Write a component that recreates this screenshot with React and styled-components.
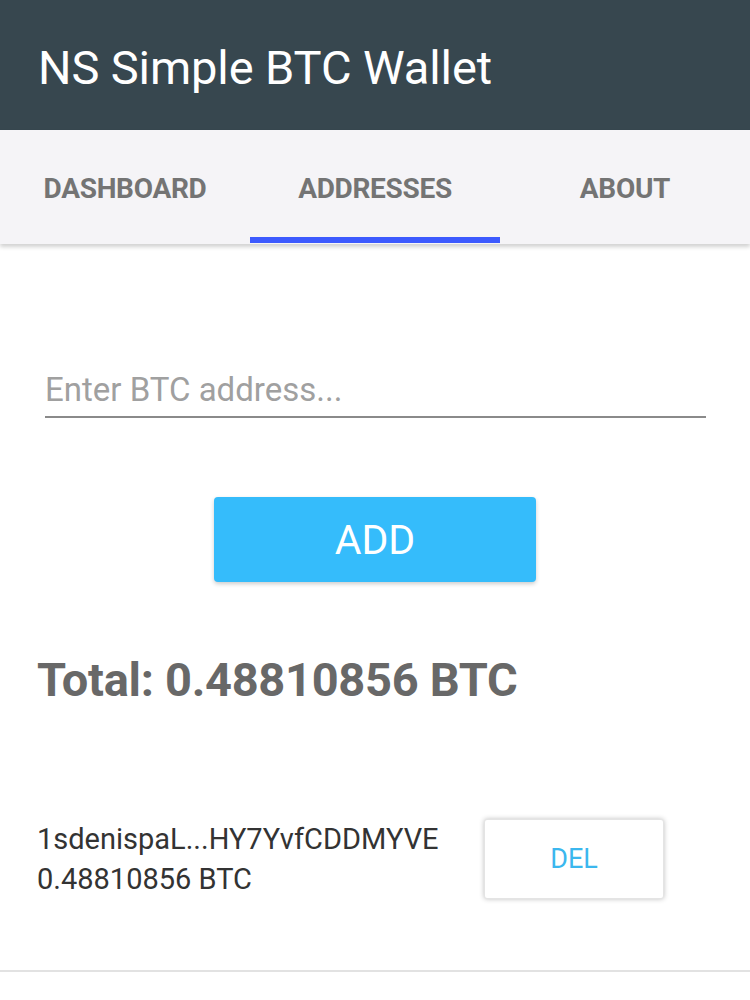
import styled, { createGlobalStyle } from "styled-components";

const GlobalStyle = createGlobalStyle`
  html, body {
    margin: 0;
    padding: 0;
    background: #fff;
    font-family: Roboto, "Liberation Sans", sans-serif;
  }
`;

const tabs = ["DASHBOARD", "ADDRESSES", "ABOUT"];

const addresses = [
  { id: 1, label: "1sdenispaL...HY7YvfCDDMYVE", balance: "0.48810856 BTC" },
];

const App = () => {
  return (
    <Page>
      <GlobalStyle />
      <ActionBar>
        <Title>NS Simple BTC Wallet</Title>
      </ActionBar>
      <TabBar>
        {tabs.map((tab) => (
          <Tab key={tab} active={tab === "ADDRESSES"}>
            {tab}
          </Tab>
        ))}
      </TabBar>
      <Content>
        <AddressInput placeholder="Enter BTC address..." />
        <AddButton type="button">ADD</AddButton>
        <Total>Total: 0.48810856 BTC</Total>
        <List>
          {addresses.map((item) => (
            <Row key={item.id}>
              <AddressInfo>
                <span>{item.label}</span>
                <span>{item.balance}</span>
              </AddressInfo>
              <DelButton type="button">DEL</DelButton>
            </Row>
          ))}
        </List>
      </Content>
    </Page>
  );
};

const Page = styled.div`
  width: 750px;
  min-height: 1000px;
  background: #fff;
`;

const ActionBar = styled.header`
  height: 130px;
  background: #37474f;
  display: flex;
  align-items: center;
  padding: 0 38px;
  box-sizing: border-box;
`;

const Title = styled.h1`
  margin: 4px 0 0;
  color: #fff;
  font-size: 47px;
  font-weight: 400;
  letter-spacing: -0.1px;
`;

const TabBar = styled.nav`
  height: 114px;
  background: #f5f4f7;
  display: grid;
  grid-template-columns: repeat(3, 1fr);
  box-shadow: 0 3px 4px rgba(0, 0, 0, 0.18);
  position: relative;
  z-index: 1;
`;

const Tab = styled.div`
  display: flex;
  align-items: center;
  justify-content: center;
  padding-top: 10px;
  font-size: 28px;
  font-weight: 700;
  color: #747474;
  letter-spacing: -0.3px;
  border-bottom: 6px solid ${(props) => (props.active ? "#3d5afe" : "transparent")};
  margin-bottom: 1px;
`;

const Content = styled.main`
  display: flex;
  flex-direction: column;
  padding-top: 126px;
`;

const AddressInput = styled.input`
  margin: 0 44px 0 45px;
  padding: 0 0 7px;
  border: none;
  border-bottom: 2px solid #8a8a8a;
  outline: none;
  background: transparent;
  font-family: Roboto, "Liberation Sans", sans-serif;
  font-size: 33px;
  color: #333;
  &::placeholder {
    color: #a0a0a0;
  }
`;

const AddButton = styled.button`
  align-self: center;
  margin-top: 79px;
  width: 322px;
  height: 85px;
  border: none;
  border-radius: 4px;
  background: #35bcfb;
  color: #fff;
  font-family: Roboto, "Liberation Sans", sans-serif;
  font-size: 41px;
  font-weight: 400;
  box-shadow: 0 2px 4px rgba(0, 0, 0, 0.2);
`;

const Total = styled.h2`
  margin: 70px 0 0 37px;
  font-size: 47px;
  font-weight: 700;
  color: #686868;
  letter-spacing: -0.3px;
`;

const List = styled.ul`
  list-style: none;
  margin: 112px 0 0;
  padding: 0;
`;

const Row = styled.li`
  display: flex;
  align-items: center;
  padding: 0 0 71px 37px;
  border-bottom: 2px solid #e2e2e2;
`;

const AddressInfo = styled.div`
  display: flex;
  flex-direction: column;
  width: 447px;
  font-size: 29px;
  line-height: 40px;
  color: #333;
  letter-spacing: 0;
`;

const DelButton = styled.button`
  width: 180px;
  height: 80px;
  border: 1px solid #e4e4e4;
  border-radius: 3px;
  background: #fff;
  color: #3bb7ee;
  font-family: Roboto, "Liberation Sans", sans-serif;
  font-size: 27px;
  box-shadow: 0 0 5px rgba(0, 0, 0, 0.25);
`;

export default App;
